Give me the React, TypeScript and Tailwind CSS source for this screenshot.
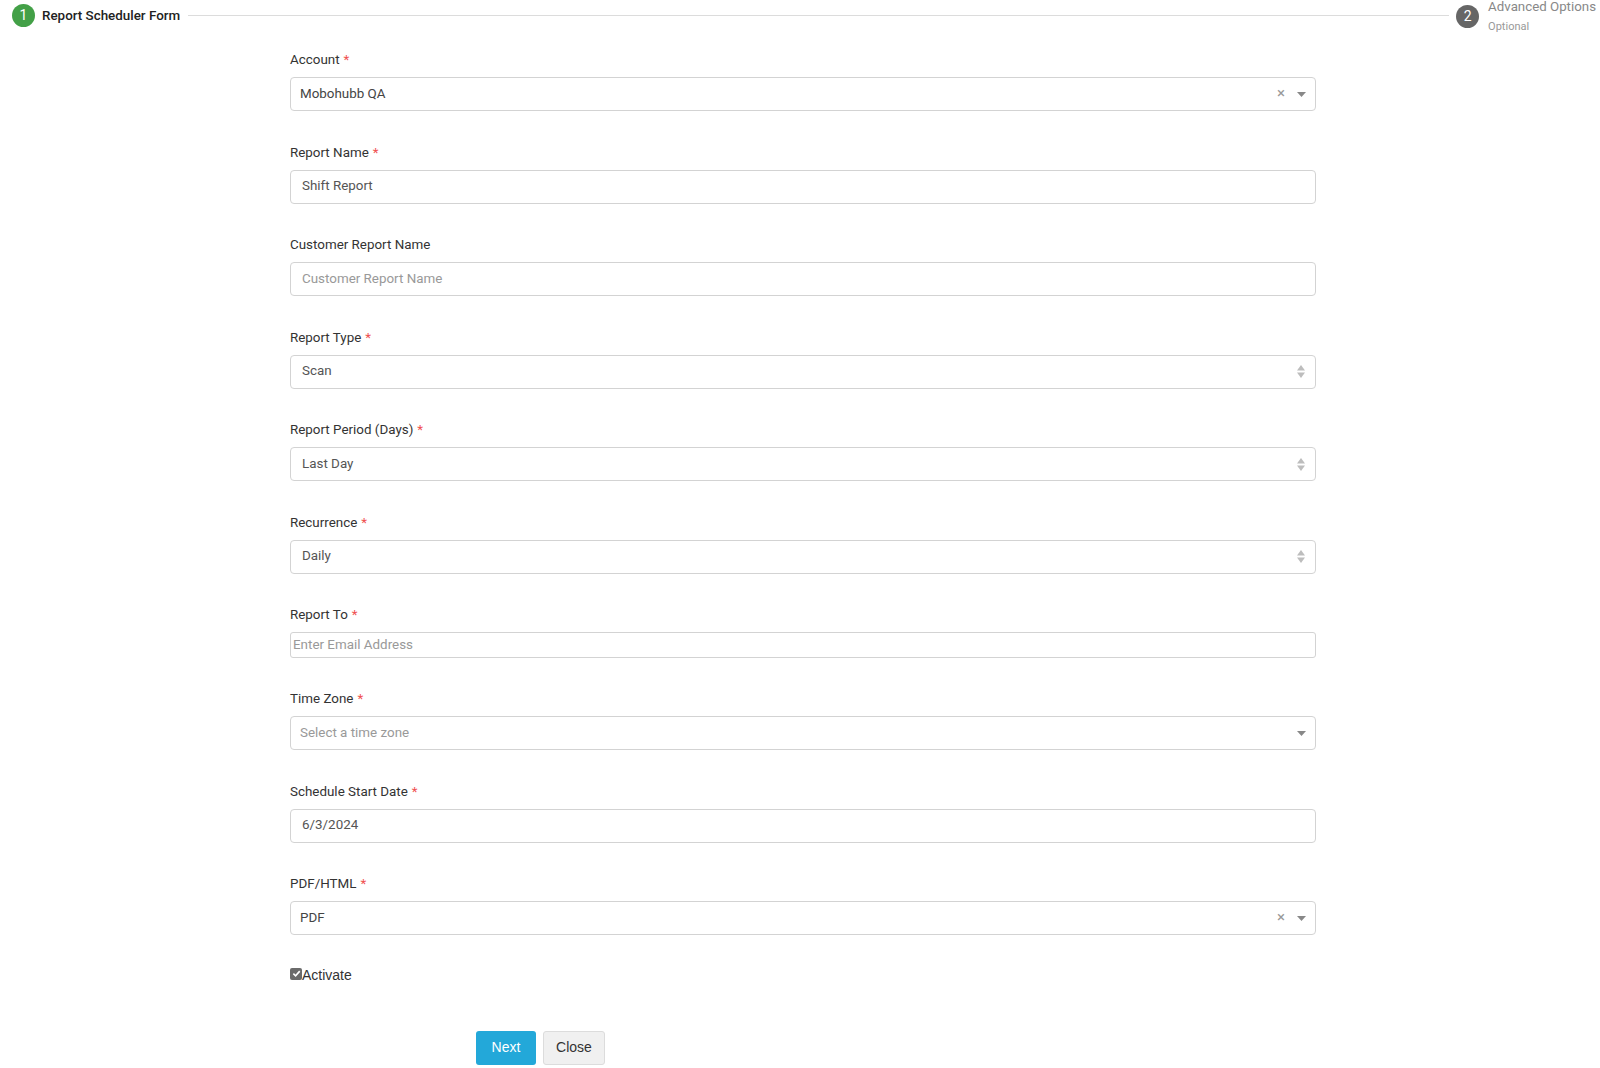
import React from 'react';

type FieldKind = 'select2' | 'text' | 'native' | 'plain';

interface Field {
  label: string;
  required?: boolean;
  kind: FieldKind;
  value?: string;
  placeholder?: string;
  clearable?: boolean;
}

const fields: Field[] = [
  { label: 'Account', required: true, kind: 'select2', value: 'Mobohubb QA', clearable: true },
  { label: 'Report Name', required: true, kind: 'text', value: 'Shift Report' },
  { label: 'Customer Report Name', kind: 'text', placeholder: 'Customer Report Name' },
  { label: 'Report Type', required: true, kind: 'native', value: 'Scan' },
  { label: 'Report Period (Days)', required: true, kind: 'native', value: 'Last Day' },
  { label: 'Recurrence', required: true, kind: 'native', value: 'Daily' },
  { label: 'Report To', required: true, kind: 'plain', placeholder: 'Enter Email Address' },
  { label: 'Time Zone', required: true, kind: 'select2', placeholder: 'Select a time zone' },
  { label: 'Schedule Start Date', required: true, kind: 'text', value: '6/3/2024' },
  { label: 'PDF/HTML', required: true, kind: 'select2', value: 'PDF', clearable: true },
];

function Caret() {
  return (
    <svg width="9" height="5" viewBox="0 0 9 5" className="shrink-0">
      <path d="M0 0 L9 0 L4.5 5 Z" fill="#888" />
    </svg>
  );
}

function UpDown() {
  return (
    <svg width="8" height="13" viewBox="0 0 8 13" className="shrink-0">
      <path d="M4 0 L8 5.5 L0 5.5 Z" fill="#bdbdbd" />
      <path d="M0 7.5 L8 7.5 L4 13 Z" fill="#bdbdbd" />
    </svg>
  );
}

function FieldControl({ field }: { field: Field }) {
  if (field.kind === 'select2') {
    return (
      <div className="h-[34px] border border-[#d3d3d3] rounded-[4px] flex items-center pl-[9px] pr-[9px] text-[13.4px]">
        <span className={`flex-1 ${field.value ? 'text-[#444]' : 'text-[#999]'}`}>
          {field.value ?? field.placeholder}
        </span>
        {field.clearable && <span className="text-[#999] text-[15px] leading-none mr-[12px] -mt-[2px]">×</span>}
        <Caret />
      </div>
    );
  }
  if (field.kind === 'native') {
    return (
      <div className="h-[34px] border border-[#d3d3d3] rounded-[4px] flex items-center pl-[11px] pr-[10px] text-[13.4px] text-[#555]">
        <span className="flex-1">{field.value}</span>
        <UpDown />
      </div>
    );
  }
  if (field.kind === 'plain') {
    return (
      <div className="h-[26px] border border-[#d3d3d3] rounded-[3px] flex items-center pl-[2px] text-[13.4px] text-[#999]">
        {field.placeholder}
      </div>
    );
  }
  return (
    <div className="h-[34px] border border-[#d3d3d3] rounded-[4px] flex items-center pl-[11px] text-[13.4px]">
      <span className={field.value ? 'text-[#555]' : 'text-[#999]'}>{field.value ?? field.placeholder}</span>
    </div>
  );
}

export default function App() {
  return (
    <div className="w-[1600px] h-[1068px] bg-white overflow-hidden font-['Roboto','Liberation_Sans',sans-serif] text-[#333]">
      {/* Stepper */}
      <div className="flex items-start h-[50px] pl-[12px] pr-[4px] pt-[4px]">
        <div className="w-[23px] h-[23px] rounded-full bg-[#43a047] text-white text-[14px] flex items-center justify-center shrink-0">
          1
        </div>
        <span className="ml-[7px] text-[13.4px] leading-[23px] font-medium text-[#222] shrink-0 whitespace-nowrap">
          Report Scheduler Form
        </span>
        <div className="flex-1 h-px bg-[#dcdcdc] mt-[11px] ml-[8px] mr-[7px]" />
        <div className="w-[23px] h-[23px] rounded-full bg-[#666] text-white text-[14px] flex items-center justify-center shrink-0 mt-[1px]">
          2
        </div>
        <div className="ml-[9px] -mt-[5px] shrink-0 whitespace-nowrap">
          <div className="text-[13.3px] leading-[16px] text-[#888]">Advanced Options</div>
          <div className="text-[11px] leading-[14px] text-[#999] mt-[5px]">Optional</div>
        </div>
      </div>

      {/* Form */}
      <div className="ml-[290px] w-[1026px]">
        {fields.map((f) => (
          <div key={f.label} className={f.kind === 'plain' ? 'h-[84px]' : 'h-[92.5px]'}>
            <div className="h-5 leading-5 text-[13.4px] mb-[7px] text-[#333]">
              {f.label}
              {f.required && <span className="text-[#f05050] ml-[4px]">*</span>}
            </div>
            <FieldControl field={f} />
          </div>
        ))}

        <div className="flex items-start h-4 font-['Liberation_Sans',Arial,sans-serif]">
          <span className="w-[12px] h-[12px] mt-[1px] rounded-[2px] bg-[#6b6b6b] flex items-center justify-center">
            <svg width="9" height="9" viewBox="0 0 10 10">
              <path d="M1.5 5.2 L4 7.6 L8.6 2.4" stroke="#fff" strokeWidth="1.8" fill="none" />
            </svg>
          </span>
          <span className="text-[14px] leading-[16px] text-[#333]">Activate</span>
        </div>

        <div className="flex mt-[48px] ml-[186px] font-['Liberation_Sans',Arial,sans-serif] text-[14px]">
          <button className="w-[60px] h-[34px] rounded-[3px] bg-[#23a8d9] text-white">Next</button>
          <button className="w-[62px] h-[34px] ml-[7px] rounded-[3px] bg-[#f0f0f0] border border-[#dcdcdc] text-[#333]">
            Close
          </button>
        </div>
      </div>
    </div>
  );
}
